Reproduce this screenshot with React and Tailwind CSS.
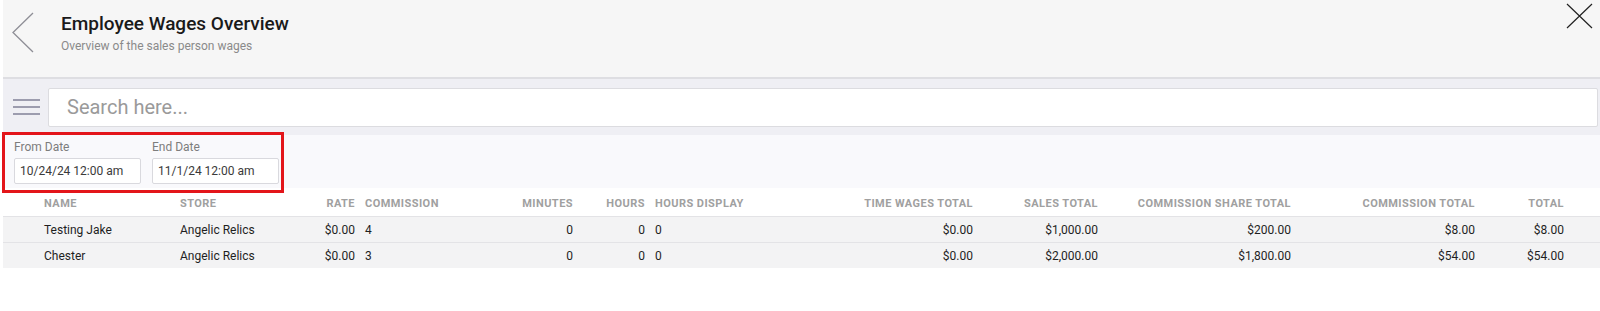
import { useState } from "react";

const columns = [
  { key: "name", label: "Name", align: "left", width: 136 },
  { key: "store", label: "Store", align: "left", width: 125 },
  { key: "rate", label: "Rate", align: "right", width: 60 },
  { key: "commission", label: "Commission", align: "left", width: 110 },
  { key: "minutes", label: "Minutes", align: "right", width: 108 },
  { key: "hours", label: "Hours", align: "right", width: 72 },
  { key: "hoursDisplay", label: "Hours Display", align: "left", width: 150 },
  { key: "timeWages", label: "Time Wages Total", align: "right", width: 178 },
  { key: "sales", label: "Sales Total", align: "right", width: 125 },
  { key: "share", label: "Commission Share Total", align: "right", width: 193 },
  { key: "commissionTotal", label: "Commission Total", align: "right", width: 184 },
  { key: "total", label: "Total", align: "right", width: 89 },
];

const rows = [
  {
    name: "Testing Jake",
    store: "Angelic Relics",
    rate: "$0.00",
    commission: "4",
    minutes: "0",
    hours: "0",
    hoursDisplay: "0",
    timeWages: "$0.00",
    sales: "$1,000.00",
    share: "$200.00",
    commissionTotal: "$8.00",
    total: "$8.00",
  },
  {
    name: "Chester",
    store: "Angelic Relics",
    rate: "$0.00",
    commission: "3",
    minutes: "0",
    hours: "0",
    hoursDisplay: "0",
    timeWages: "$0.00",
    sales: "$2,000.00",
    share: "$1,800.00",
    commissionTotal: "$54.00",
    total: "$54.00",
  },
];

function DateField({ label, value }) {
  return (
    <div className="flex flex-col">
      <span className="text-[12px] leading-[14px] text-[#7d7d7d]">{label}</span>
      <div className="mt-[4px] flex h-[26px] w-[127px] items-center rounded-[2px] border border-[#d9d9de] bg-white px-[5px] text-[12px] text-[#3a3a3a]">
        {value}
      </div>
    </div>
  );
}

export default function App() {
  const [search, setSearch] = useState("");

  return (
    <div className="relative min-h-[311px] bg-white pl-[3px] font-['Roboto',sans-serif]">
      {/* header */}
      <header className="flex h-[79px] items-start border-b-2 border-[#dedee2] bg-[#f6f6f6]">
        <button className="ml-[8px] mt-[12px] text-[#8e8e96]">
          <svg width="24" height="41" viewBox="0 0 24 41" fill="none" stroke="currentColor" strokeWidth="1.3">
            <path d="M22 1 L2 20.5 L22 40" />
          </svg>
        </button>
        <div className="ml-[26px] mt-[13px]">
          <h1 className="text-[19px] font-medium leading-[22px] text-[#1a1a1a]">Employee Wages Overview</h1>
          <p className="mt-[4px] text-[12px] leading-[14px] text-[#8a8a8a]">Overview of the sales person wages</p>
        </div>
        <button className="ml-auto mr-[7px] mt-[3px] text-[#222]">
          <svg width="27" height="26" viewBox="0 0 27 26" fill="none" stroke="currentColor" strokeWidth="1.2">
            <path d="M1 1 L26 25 M26 1 L1 25" />
          </svg>
        </button>
      </header>

      {/* search */}
      <div className="flex h-[56px] items-center bg-[#efeff4] pr-[2px]">
        <div className="flex w-[45px] flex-col items-center gap-[5.5px] pl-[2px]">
          <span className="block h-[1.5px] w-[27px] bg-[#9c9cae]" />
          <span className="block h-[1.5px] w-[27px] bg-[#9c9cae]" />
          <span className="block h-[1.5px] w-[27px] bg-[#9c9cae]" />
        </div>
        <input
          value={search}
          onChange={(event) => setSearch(event.target.value)}
          placeholder="Search here..."
          className="h-[39px] flex-1 rounded-[2px] border border-[#dcdce0] bg-white px-[18px] text-[20px] text-[#333] outline-none placeholder:text-[#9a9a9a]"
        />
      </div>

      {/* date filters */}
      <div className="flex h-[53px] gap-[11px] bg-[#f9f9fc] pl-[11px] pt-[5px]">
        <DateField label="From Date" value="10/24/24 12:00 am" />
        <DateField label="End Date" value="11/1/24 12:00 am" />
      </div>

      {/* highlight */}
      <div className="pointer-events-none absolute left-[2px] top-[132px] h-[61px] w-[282px] border-[3px] border-[#e3151a]" />

      {/* table */}
      <table className="w-full table-fixed border-collapse">
        <colgroup>
          <col className="w-[36px]" />
          {columns.map((col) => (
            <col key={col.key} style={{ width: col.width }} />
          ))}
          <col className="w-[31px]" />
        </colgroup>
        <thead>
          <tr className="h-[28px] bg-white">
            <th />
            {columns.map((col) => (
              <th
                key={col.key}
                className={`px-[5px] pt-[5px] text-[11px] font-bold uppercase tracking-[0.45px] text-[#a0a0a0] ${
                  col.align === "right" ? "text-right" : "text-left"
                }`}
              >
                {col.label}
              </th>
            ))}
            <th />
          </tr>
        </thead>
        <tbody>
          {rows.map((row) => (
            <tr key={row.name} className="h-[26px] border-t border-[#e3e3e6] bg-[#f3f3f4]">
              <td />
              {columns.map((col) => (
                <td
                  key={col.key}
                  className={`px-[5px] pt-[1px] text-[12px] text-[#1f1f1f] ${
                    col.align === "right" ? "text-right" : "text-left"
                  }`}
                >
                  {row[col.key]}
                </td>
              ))}
              <td />
            </tr>
          ))}
        </tbody>
      </table>
    </div>
  );
}
